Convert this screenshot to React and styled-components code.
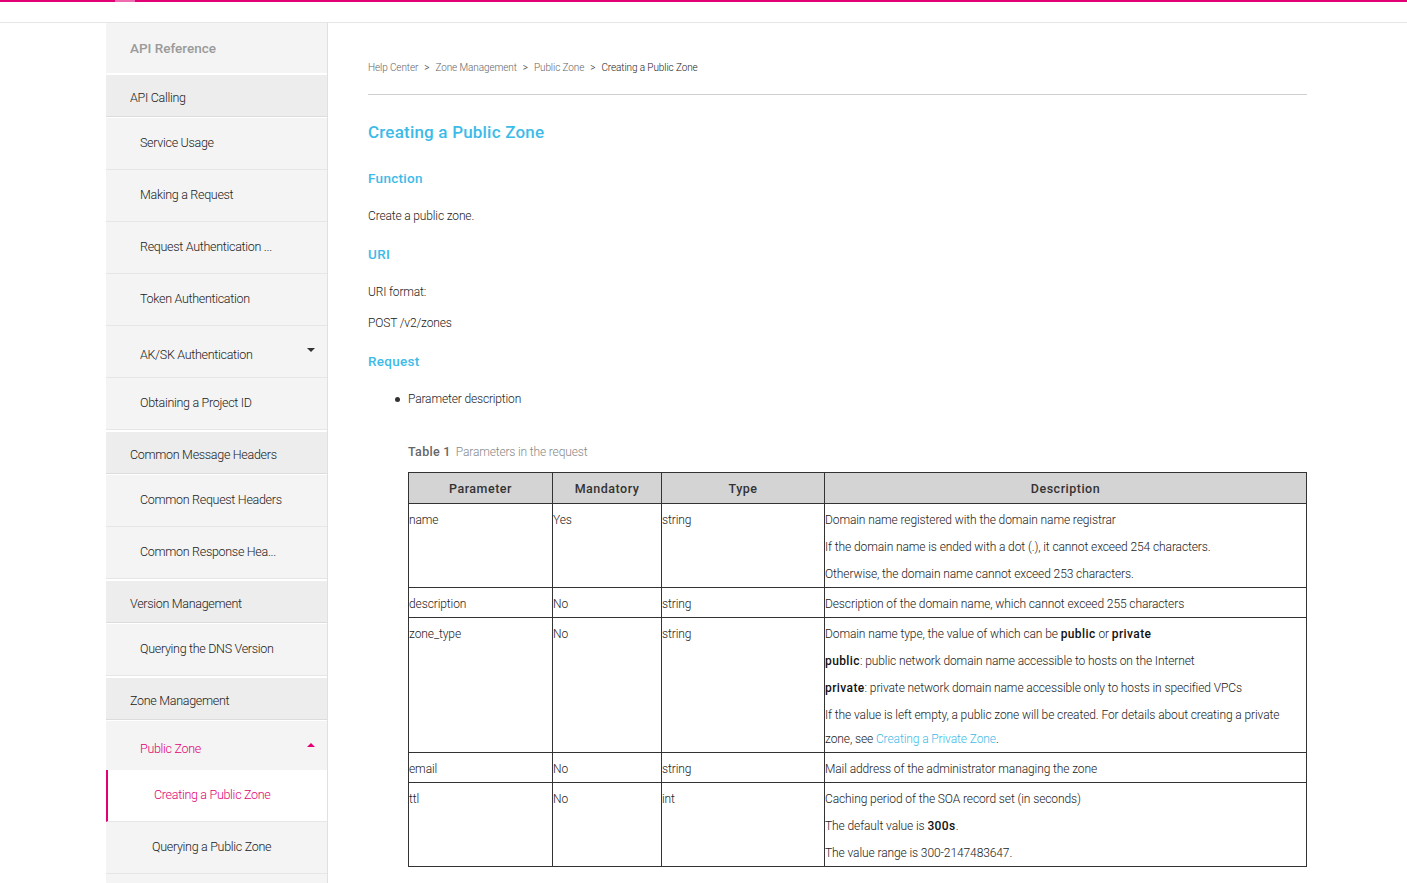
import React from "react";
import styled, { createGlobalStyle } from "styled-components";

const Global = createGlobalStyle`
  html, body { margin: 0; padding: 0; background: #fff; }
  body { font-family: Roboto, "Liberation Sans", Arial, sans-serif; color: #333; }
  * { box-sizing: border-box; }
`;

const TopBar = styled.div`
  height: 23px;
  border-top: 2px solid #e20074;
  border-bottom: 1px solid #e6e6e6;
  display: flex;
`;
const TopTab = styled.div`
  margin-left: 115px;
  margin-top: -2px;
  width: 20px;
  height: 2px;
  background: #f06ab0;
`;

const Layout = styled.div`
  display: flex;
  margin-left: 106px;
  width: 1240px;
  min-height: 860px;
`;

const Sidebar = styled.nav`
  width: 222px;
  flex: none;
  border-right: 1px solid #e0e0e0;
  display: flex;
  flex-direction: column;
`;

const NavTitle = styled.div`
  height: 50px;
  background: #f4f4f4;
  padding-left: 24px;
  display: flex;
  align-items: center;
  font-size: 13.5px;
  font-weight: 500;
  letter-spacing: 0px;
  color: #9a9a9a;
`;

const NavGroup = styled.div`
  height: 42px;
  margin: 2px 0 1px;
  padding-top: 3px;
  background: #ededed;
  border-bottom: 1px solid #dcdcdc;
  padding-left: 24px;
  display: flex;
  align-items: center;
  font-size: 12.5px;
  font-weight: 300;
  letter-spacing: -0.3px;
  color: #222;
`;

const NavItem = styled.div`
  height: ${p => (p.$open ? 49 : 52)}px;
  background: ${p => (p.$active ? "#fff" : "#f4f4f4")};
  border-bottom: ${p => (p.$open ? "0" : "1px solid #e6e6e6")};
  border-left: ${p => (p.$active ? "2px solid #e20074" : "0")};
  padding: ${p => (p.$parent ? "6px 12px 0" : "0 12px 2px")};
  padding-left: ${p => (p.$depth === 2 ? 46 : 34)}px;
  display: flex;
  align-items: center;
  justify-content: space-between;
  font-size: 12.5px;
  font-weight: 300;
  letter-spacing: -0.3px;
  color: ${p => (p.$pink ? "#e20074" : "#222")};
`;

const Caret = styled.span`
  width: 0;
  height: 0;
  border-left: 4px solid transparent;
  border-right: 4px solid transparent;
  ${p =>
    p.$up
      ? `border-bottom: 4px solid ${p.$color};`
      : `border-top: 4px solid ${p.$color};`}
  margin-top: ${p => (p.$up ? -8 : -10)}px;
`;

const Main = styled.main`
  flex: 1;
  padding: 36px 40px 0 40px;
`;

const Crumbs = styled.div`
  display: flex;
  align-items: center;
  height: 16px;
  font-size: 10px;
  font-weight: 300;
  letter-spacing: -0.1px;
  color: #666;
`;
const Crumb = styled.span`
  color: ${p => (p.$current ? "#222" : "#666")};
`;
const CrumbSep = styled.span`
  margin: 0 6px;
  color: #333;
`;

const Divider = styled.div`
  margin-top: 19px;
  height: 1px;
  background: #cfcfcf;
`;

const Title = styled.h1`
  margin: 25px 0 24px;
  font-size: 17px;
  line-height: 24px;
  font-weight: 500;
  letter-spacing: 0.2px;
  color: #3dbbe8;
`;

const H3 = styled.h3`
  margin: 18px 0;
  font-size: 13.5px;
  line-height: 20px;
  font-weight: 500;
  letter-spacing: 0.3px;
  color: #3dbbe8;
`;

const P = styled.p`
  margin: 11px 0;
  font-size: 12px;
  line-height: 20px;
  font-weight: 300;
  letter-spacing: -0.15px;
  color: #222;
`;

const List = styled.ul`
  margin: 18px 0 0;
  padding-left: 40px;
`;
const ListItem = styled.li`
  font-size: 12px;
  line-height: 20px;
  font-weight: 300;
  letter-spacing: -0.15px;
  color: #222;
  list-style: none;
  display: flex;
  align-items: center;
  &::before {
    content: "";
    width: 5px;
    height: 5px;
    border-radius: 50%;
    background: #333;
    margin-right: 8px;
    margin-left: -13px;
  }
`;

const TableWrap = styled.div`
  margin: 33px 0 0 40px;
`;
const Caption = styled.div`
  height: 20px;
  line-height: 20px;
  margin-bottom: 10px;
  font-size: 12px;
  font-weight: 300;
  letter-spacing: -0.15px;
  color: #888;
`;
const CaptionNum = styled.span`
  font-weight: 500;
  font-size: 12.5px;
  letter-spacing: 0.3px;
  color: #666;
  margin-right: 5px;
`;

const Table = styled.table`
  width: 898px;
  border-collapse: collapse;
  table-layout: fixed;
`;
const Th = styled.th`
  height: 31px;
  background: #d4d4d4;
  border: 1px solid #333;
  font-size: 12.5px;
  font-weight: 500;
  letter-spacing: 0.5px;
  color: #333;
  text-align: center;
  padding: 0;
`;
const Td = styled.td`
  border: 1px solid #333;
  vertical-align: top;
  padding: 4px 2px 1px 0;
  font-size: 12px;
  font-weight: 300;
  letter-spacing: -0.1px;
  color: #222;
  line-height: 24px;
`;
const CellP = styled.div`
  margin-bottom: 3px;
  &:last-child { margin-bottom: 0; }
`;
const B = styled.b`
  font-weight: 500;
  font-size: 12px;
  letter-spacing: 0.4px;
  color: #111;
`;
const Link = styled.a`
  color: #3dbbe8;
  text-decoration: none;
`;

const rows = [
  {
    p: "name",
    m: "Yes",
    t: "string",
    d: [
      "Domain name registered with the domain name registrar",
      "If the domain name is ended with a dot (.), it cannot exceed 254 characters.",
      "Otherwise, the domain name cannot exceed 253 characters.",
    ],
  },
  {
    p: "description",
    m: "No",
    t: "string",
    d: ["Description of the domain name, which cannot exceed 255 characters"],
  },
  {
    p: "zone_type",
    m: "No",
    t: "string",
    d: [
      <>Domain name type, the value of which can be <B>public</B> or <B>private</B></>,
      <><B>public</B>: public network domain name accessible to hosts on the Internet</>,
      <><B>private</B>: private network domain name accessible only to hosts in specified VPCs</>,
      <>If the value is left empty, a public zone will be created. For details about creating a private zone, see <Link href="#">Creating a Private Zone</Link>.</>,
    ],
  },
  {
    p: "email",
    m: "No",
    t: "string",
    d: ["Mail address of the administrator managing the zone"],
  },
  {
    p: "ttl",
    m: "No",
    t: "int",
    d: [
      "Caching period of the SOA record set (in seconds)",
      <>The default value is <B>300s</B>.</>,
      "The value range is 300-2147483647.",
    ],
  },
];

export default function App() {
  return (
    <>
      <Global />
      <TopBar>
        <TopTab />
      </TopBar>
      <Layout>
        <Sidebar>
          <NavTitle>API Reference</NavTitle>
          <NavGroup>API Calling</NavGroup>
          <NavItem>Service Usage</NavItem>
          <NavItem>Making a Request</NavItem>
          <NavItem>Request Authentication ...</NavItem>
          <NavItem>Token Authentication</NavItem>
          <NavItem $parent>
            AK/SK Authentication
            <Caret $color="#333" />
          </NavItem>
          <NavItem>Obtaining a Project ID</NavItem>
          <NavGroup>Common Message Headers</NavGroup>
          <NavItem>Common Request Headers</NavItem>
          <NavItem>Common Response Hea...</NavItem>
          <NavGroup>Version Management</NavGroup>
          <NavItem>Querying the DNS Version</NavItem>
          <NavGroup>Zone Management</NavGroup>
          <NavItem $parent $open $pink>
            Public Zone
            <Caret $up $color="#e20074" />
          </NavItem>
          <NavItem $depth={2} $active $pink>Creating a Public Zone</NavItem>
          <NavItem $depth={2}>Querying a Public Zone</NavItem>
          <NavItem $depth={2}>Modifying a Public Zone</NavItem>
        </Sidebar>
        <Main>
          <Crumbs>
            <Crumb>Help Center</Crumb>
            <CrumbSep>&gt;</CrumbSep>
            <Crumb>Zone Management</Crumb>
            <CrumbSep>&gt;</CrumbSep>
            <Crumb>Public Zone</Crumb>
            <CrumbSep>&gt;</CrumbSep>
            <Crumb $current>Creating a Public Zone</Crumb>
          </Crumbs>
          <Divider />
          <Title>Creating a Public Zone</Title>
          <H3>Function</H3>
          <P>Create a public zone.</P>
          <H3>URI</H3>
          <P>URI format:</P>
          <P>POST /v2/zones</P>
          <H3>Request</H3>
          <List>
            <ListItem>Parameter description</ListItem>
          </List>
          <TableWrap>
            <Caption>
              <CaptionNum>Table 1</CaptionNum>Parameters in the request
            </Caption>
            <Table>
              <colgroup>
                <col style={{ width: 144 }} />
                <col style={{ width: 109 }} />
                <col style={{ width: 163 }} />
                <col style={{ width: 482 }} />
              </colgroup>
              <thead>
                <tr>
                  <Th>Parameter</Th>
                  <Th>Mandatory</Th>
                  <Th>Type</Th>
                  <Th>Description</Th>
                </tr>
              </thead>
              <tbody>
                {rows.map(r => (
                  <tr key={r.p}>
                    <Td>{r.p}</Td>
                    <Td>{r.m}</Td>
                    <Td>{r.t}</Td>
                    <Td>
                      {r.d.map((x, i) => (
                        <CellP key={i}>{x}</CellP>
                      ))}
                    </Td>
                  </tr>
                ))}
              </tbody>
            </Table>
          </TableWrap>
        </Main>
      </Layout>
    </>
  );
}
